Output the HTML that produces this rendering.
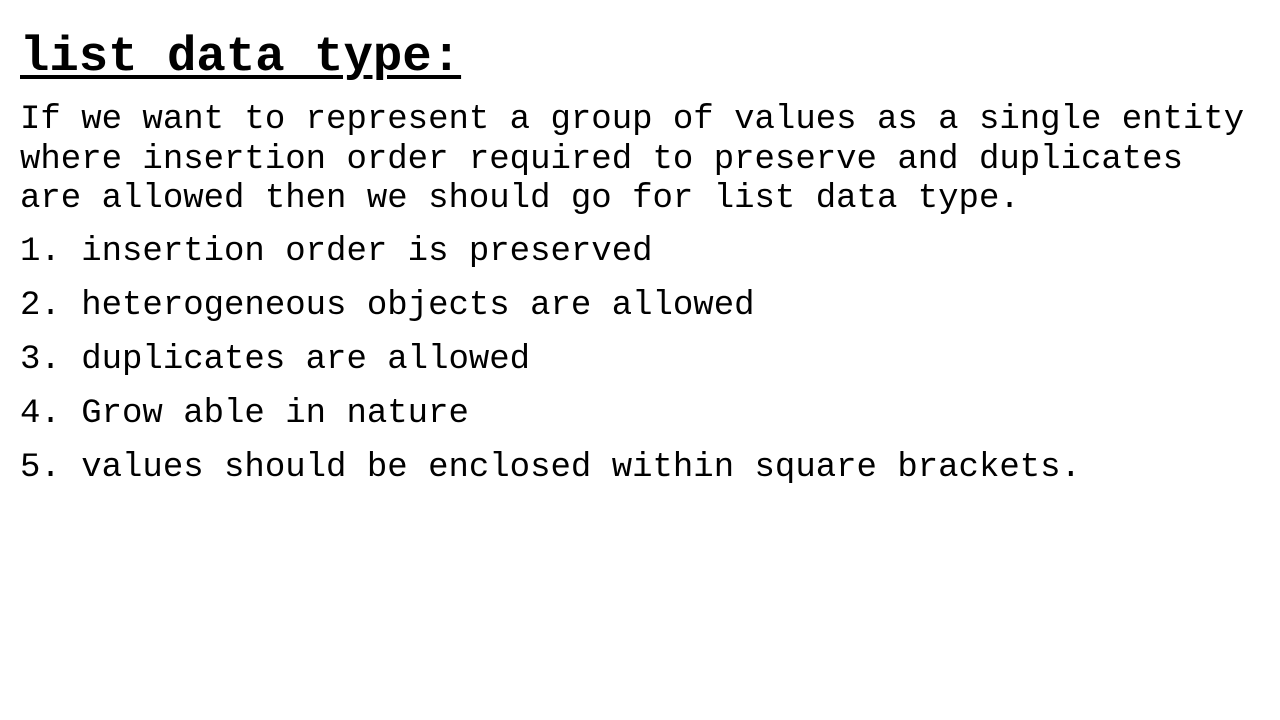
<!DOCTYPE html>
<html><head><meta charset="utf-8"><style>
html,body{margin:0;padding:0;background:#fff;width:1280px;height:720px;overflow:hidden}
body{font-family:"Liberation Mono","DejaVu Sans Mono",monospace;color:#000}
.t{position:absolute;left:20px;font-size:49px;font-weight:bold;line-height:60px;top:27px;text-decoration:underline;text-decoration-thickness:4px;text-underline-offset:5px;white-space:pre}
.l{position:absolute;left:20px;font-size:34px;line-height:40px;white-space:pre}
</style></head><body>
<div class="t">list data type:</div>
<div class="l" style="top:100px">If we want to represent a group of values as a single entity</div>
<div class="l" style="top:140px">where insertion order required to preserve and duplicates</div>
<div class="l" style="top:179px">are allowed then we should go for list data type.</div>
<div class="l" style="top:232px">1. insertion order is preserved</div>
<div class="l" style="top:286px">2. heterogeneous objects are allowed</div>
<div class="l" style="top:340px">3. duplicates are allowed</div>
<div class="l" style="top:394px">4. Grow able in nature</div>
<div class="l" style="top:448px">5. values should be enclosed within square brackets.</div>
</body></html>
